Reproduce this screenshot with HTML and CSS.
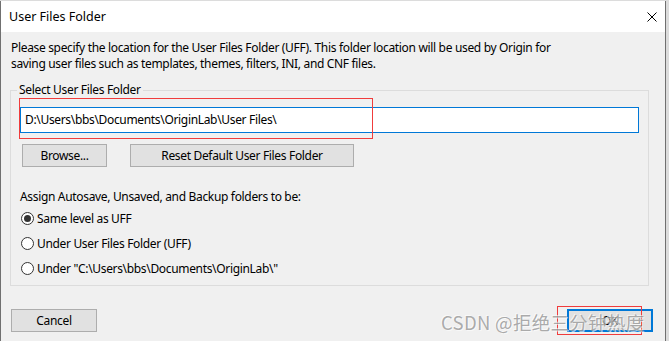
FILE: index.html
```html
<!DOCTYPE html>
<html lang="en">
<head>
<meta charset="utf-8">
<title>User Files Folder</title>
<link rel="stylesheet" href="styles.css">
</head>
<body>
<div class="dialog">
  <div class="titlebar">
    <span class="title">User Files Folder</span>
    <svg class="close" width="10" height="10" viewBox="0 0 10 10"><path d="M0.5 0.5 L9.5 9.5 M9.5 0.5 L0.5 9.5" stroke="#000" stroke-width="1" fill="none"/></svg>
  </div>
  <div class="content">
    <p class="desc">Please specify the location for the User Files Folder (UFF). This folder location will be used by Origin for<br>saving user files such as templates, themes, filters, INI, and CNF files.</p>
    <fieldset class="group">
      <legend class="legend">Select User Files Folder</legend>
      <div class="path-input">D:\Users\bbs\Documents\OriginLab\User Files\</div>
      <div class="btn-row">
        <div class="btn btn-browse">Browse...</div>
        <div class="btn btn-reset">Reset Default User Files Folder</div>
      </div>
      <div class="assign">Assign Autosave, Unsaved, and Backup folders to be:</div>
      <div class="radio-row"><span class="radio checked"></span><span>Same level as UFF</span></div>
      <div class="radio-row"><span class="radio"></span><span>Under User Files Folder (UFF)</span></div>
      <div class="radio-row"><span class="radio"></span><span>Under "C:\Users\bbs\Documents\OriginLab\"</span></div>
    </fieldset>
    <div class="footer">
      <div class="btn btn-cancel">Cancel</div>
      <div class="btn btn-ok">OK</div>
    </div>
  </div>
</div>
<div class="mark mark-input"></div>
<div class="mark mark-ok"></div>
<div class="watermark">CSDN @拒绝三分钟热度</div>
</body>
</html>
```

FILE: styles.css
```css
html, body {
  margin: 0;
  padding: 0;
}
body {
  width: 669px;
  height: 341px;
  overflow: hidden;
  background: #dcdcdc;
  font-family: "Noto Sans", "Liberation Sans", sans-serif;
  font-size: 12px;
  line-height: 16px;
  letter-spacing: -0.33px;
  color: #000;
  position: relative;
}
.dialog {
  margin-top: 1px;
  width: 666px;
  height: 340px;
  box-sizing: border-box;
  border-left: 1px solid #707070;
  border-right: 1px solid #707070;
  display: flex;
  flex-direction: column;
}
.titlebar {
  height: 31px;
  flex: none;
  background: #fff;
  display: flex;
  align-items: center;
  justify-content: space-between;
  padding: 0 8px 0 8px;
}
.title {
  font-size: 12.5px;
  letter-spacing: 0;
}
.close {
  display: block;
}
.content {
  flex: 1;
  background: #f0f0f0;
  padding: 8px 0 0 9px;
}
.desc {
  margin: 0;
  padding-left: 1px;
}
.group {
  margin: 10px 0 0 0;
  width: 639px;
  box-sizing: border-box;
  border: 1px solid #dcdcdc;
  padding: 0 9px 4px 9px;
  min-width: 0;
}
.legend {
  margin-left: -3px;
  padding: 0 2px;
  line-height: 16px;
}
.path-input {
  margin-top: 9px;
  height: 26px;
  box-sizing: border-box;
  border: 1px solid #0078d7;
  background: #fff;
  padding: 0 4px;
  display: flex;
  align-items: center;
}
.btn-row {
  margin-top: 11px;
  margin-left: 2px;
  display: flex;
  gap: 23px;
}
.btn {
  height: 23px;
  box-sizing: border-box;
  border: 1px solid #adadad;
  background: #e1e1e1;
  display: flex;
  align-items: center;
  justify-content: center;
}
.btn-browse { width: 85px; }
.btn-reset { width: 224px; }
.assign {
  margin-top: 22px;
}
.radio-row {
  height: 25px;
  display: flex;
  align-items: center;
  gap: 3px;
}
.assign + .radio-row { margin-top: 1px; }
.radio {
  width: 13px;
  height: 13px;
  box-sizing: border-box;
  border: 1px solid #333;
  border-radius: 50%;
  background: #fff;
  margin-left: 1px;
  display: flex;
  align-items: center;
  justify-content: center;
}
.radio.checked::after {
  content: "";
  width: 7px;
  height: 7px;
  border-radius: 50%;
  background: #333;
}
.footer {
  margin-top: 23px;
  margin-left: 1px;
  margin-right: 12px;
  display: flex;
  justify-content: space-between;
}
.btn-cancel { width: 86px; }
.btn-ok {
  width: 86px;
  border: 2px solid #0078d7;
}
.mark {
  position: absolute;
  border: 1px solid #f03c3c;
  box-sizing: border-box;
}
.mark-input {
  left: 19px;
  top: 98px;
  width: 354px;
  height: 41px;
}
.mark-ok {
  left: 557px;
  top: 306px;
  width: 85px;
  height: 29px;
}
.watermark {
  position: absolute;
  left: 441px;
  top: 309px;
  font-family: "Noto Sans CJK SC", "Liberation Sans", sans-serif;
  font-size: 18.5px;
  line-height: 26px;
  letter-spacing: 0.3px;
  color: rgba(150, 150, 150, 0.8);
  text-shadow: 1px 1px 0 rgba(255, 255, 255, 0.6), -1px -1px 0 rgba(255, 255, 255, 0.6);
  white-space: nowrap;
}
```
